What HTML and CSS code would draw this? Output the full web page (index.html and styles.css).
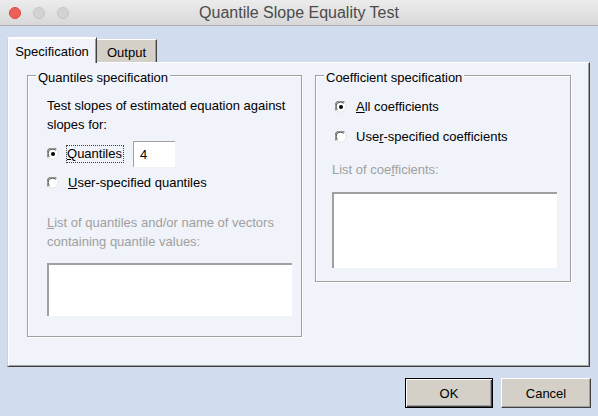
FILE: index.html
```html
<!DOCTYPE html>
<html>
<head>
<meta charset="utf-8">
<link rel="stylesheet" href="styles.css">
</head>
<body>
<div class="window">
  <div class="titlebar">
    <div class="lights">
      <span class="light red"></span><span class="light"></span><span class="light"></span>
    </div>
    <div class="title">Quantile Slope Equality Test</div>
    <div></div>
  </div>
  <div class="content">
    <div class="tabs">
      <div class="tab active">Specification</div>
      <div class="tab">Output</div>
    </div>
    <div class="panel">
      <div class="group g-left">
        <span class="legend">Quantiles specification</span>
        <p class="para">Test slopes of estimated equation against<br>slopes for:</p>
        <div class="row r-q">
          <svg class="radio" width="12" height="12" viewBox="0 0 12 12"><circle cx="6" cy="6" r="5.5" fill="#fff"/><path d="M1.5 9.5 A5.5 5.5 0 0 1 9.5 1.5" fill="none" stroke="#808080" stroke-width="1.2"/><path d="M2.4 8.6 A4.3 4.3 0 0 1 8.6 2.4" fill="none" stroke="#404040" stroke-width="1"/><path d="M9.5 1.5 A5.5 5.5 0 0 1 1.5 9.5" fill="none" stroke="#e2e2e2" stroke-width="1"/><circle cx="6" cy="6" r="2" fill="#000"/></svg>
          <span class="label focus"><u>Q</u>uantiles</span>
          <div class="field">4</div>
        </div>
        <div class="row r-u">
          <svg class="radio" width="12" height="12" viewBox="0 0 12 12"><circle cx="6" cy="6" r="5.5" fill="#fff"/><path d="M1.5 9.5 A5.5 5.5 0 0 1 9.5 1.5" fill="none" stroke="#808080" stroke-width="1.2"/><path d="M2.4 8.6 A4.3 4.3 0 0 1 8.6 2.4" fill="none" stroke="#404040" stroke-width="1"/><path d="M9.5 1.5 A5.5 5.5 0 0 1 1.5 9.5" fill="none" stroke="#e2e2e2" stroke-width="1"/></svg>
          <span class="label"><u>U</u>ser-specified quantiles</span>
        </div>
        <p class="para dis l-list"><u>L</u>ist of quantiles and/or name of vectors<br>containing quantile values:</p>
        <div class="listbox lb-left"></div>
      </div>
      <div class="group g-right">
        <span class="legend">Coefficient specification</span>
        <div class="row r-all">
          <svg class="radio" width="12" height="12" viewBox="0 0 12 12"><circle cx="6" cy="6" r="5.5" fill="#fff"/><path d="M1.5 9.5 A5.5 5.5 0 0 1 9.5 1.5" fill="none" stroke="#808080" stroke-width="1.2"/><path d="M2.4 8.6 A4.3 4.3 0 0 1 8.6 2.4" fill="none" stroke="#404040" stroke-width="1"/><path d="M9.5 1.5 A5.5 5.5 0 0 1 1.5 9.5" fill="none" stroke="#e2e2e2" stroke-width="1"/><circle cx="6" cy="6" r="2" fill="#000"/></svg>
          <span class="label"><u>A</u>ll coefficients</span>
        </div>
        <div class="row r-uc">
          <svg class="radio" width="12" height="12" viewBox="0 0 12 12"><circle cx="6" cy="6" r="5.5" fill="#fff"/><path d="M1.5 9.5 A5.5 5.5 0 0 1 9.5 1.5" fill="none" stroke="#808080" stroke-width="1.2"/><path d="M2.4 8.6 A4.3 4.3 0 0 1 8.6 2.4" fill="none" stroke="#404040" stroke-width="1"/><path d="M9.5 1.5 A5.5 5.5 0 0 1 1.5 9.5" fill="none" stroke="#e2e2e2" stroke-width="1"/></svg>
          <span class="label">Use<u>r</u>-specified coefficients</span>
        </div>
        <p class="para dis l-coef">List of coe<u>f</u>ficients:</p>
        <div class="listbox lb-right"></div>
      </div>
    </div>
    <div class="buttons">
      <div class="btn default">OK</div>
      <div class="btn">Cancel</div>
    </div>
  </div>
</div>
</body>
</html>
```
FILE: styles.css
```css
html, body {
  margin: 0;
  padding: 0;
  background: #d1ddef;
}
.window {
  width: 598px;
  height: 416px;
  font-family: "Liberation Sans", Arial, sans-serif;
  font-size: 13px;
  color: #000;
  overflow: hidden;
}
.titlebar {
  height: 25px;
  border-bottom: 1px solid #b1b1b1;
  background: linear-gradient(#ececec, #d8d8d8);
  display: grid;
  grid-template-columns: 1fr auto 1fr;
  align-items: center;
}
.lights {
  display: flex;
  gap: 12px;
  padding-left: 9px;
}
.light {
  width: 12px;
  height: 12px;
  border-radius: 50%;
  background: #d3d3d3;
  box-sizing: border-box;
  border: 1px solid #c4c4c4;
}
.light.red {
  background: #ed5f57;
  border-color: #dc4a42;
}
.title {
  font-size: 16px;
  color: #4b4b4b;
  font-family: "Liberation Sans", Arial, sans-serif;
}
.content {
  padding: 11px 0 0 7px;
}
.tabs {
  display: flex;
  align-items: flex-end;
  margin-bottom: -1px;
  position: relative;
  z-index: 1;
}
.tab {
  box-sizing: border-box;
  display: flex;
  align-items: center;
  justify-content: center;
}
.tab.active {
  width: 90px;
  height: 26px;
  background: #f0f3f9;
  border-top: 1px solid #fff;
  border-left: 1px solid #d4d0c8;
  border-right: 1px solid #404040;
  box-shadow: inset 1px 1px 0 #fff, inset -1px 0 0 #a0a0a0;
  padding-top: 1px;
}
.tab:not(.active) {
  width: 60px;
  height: 23px;
  margin-bottom: 1px;
  background: #d4d0c8;
  border-top: 1px solid #fff;
  border-right: 1px solid #404040;
  box-shadow: inset -1px 0 0 #a0a0a0;
  padding-top: 2px;
}
.panel {
  box-sizing: border-box;
  width: 583px;
  height: 305px;
  background: #f0f3f9;
  border-top: 1px solid #fff;
  border-left: 1px solid #d4d0c8;
  border-right: 1px solid #404040;
  border-bottom: 1px solid #404040;
  box-shadow: inset 1px 0 0 #fff, inset -1px -1px 0 #a0a0a0;
  padding: 12px 0 0 19px;
  display: flex;
  align-items: flex-start;
  gap: 13px;
}
.group {
  box-sizing: border-box;
  border: 1px solid #a0a0a0;
  box-shadow: 1px 1px 0 #fff, inset 1px 1px 0 #fff;
  display: flex;
  flex-direction: column;
  align-items: flex-start;
}
.g-left {
  width: 275px;
  height: 262px;
  padding-left: 19px;
}
.g-right {
  width: 256px;
  height: 207px;
  padding-left: 16px;
}
.legend {
  display: block;
  margin: -6px 0 0 -11px;
  line-height: 16px;
  height: 16px;
  padding: 0 2px;
  background: #f0f3f9;
}
.g-right .legend {
  margin-left: -8px;
}
.para {
  margin: 10px 0 0 0;
  line-height: 19px;
}
.dis {
  color: #a0a0a0;
}
.row {
  display: flex;
  align-items: center;
  height: 20px;
}
.radio {
  flex: none;
  margin-right: 9px;
}
.r-q {
  height: 26px;
  margin-top: 7px;
}
.r-u {
  margin-top: 6px;
}
.label {
  line-height: 16px;
}
.focus {
  outline: 1px dotted #404040;
  outline-offset: 0;
  padding: 0 1px 0 0;
  margin-left: -1px;
}
.field {
  box-sizing: border-box;
  width: 42px;
  height: 26px;
  margin-left: 10px;
  background: #fff;
  border-top: 1px solid #a0a0a0;
  border-left: 1px solid #a0a0a0;
  padding: 0 0 0 6px;
  display: flex;
  align-items: center;
}
.l-list {
  margin-top: 20px;
}
.listbox {
  box-sizing: border-box;
  background: #fff;
  border-top: 2px solid #a0a0a0;
  border-left: 2px solid #a0a0a0;
}
.lb-left {
  width: 245px;
  height: 53px;
  margin-top: 12px;
}
.r-all {
  margin-top: 11px;
  margin-left: 3px;
}
.r-uc {
  margin-top: 10px;
  margin-left: 3px;
}
.l-coef {
  margin-top: 13px;
}
.lb-right {
  width: 225px;
  height: 76px;
  margin-top: 13px;
}
.buttons {
  display: flex;
  justify-content: flex-end;
  gap: 8px;
  margin-top: 11px;
  padding-right: 7px;
}
.btn {
  box-sizing: border-box;
  width: 88px;
  height: 30px;
  background: #d4d0c8;
  border-top: 1px solid #fff;
  border-left: 1px solid #fff;
  border-right: 1px solid #404040;
  border-bottom: 1px solid #404040;
  box-shadow: inset -1px -1px 0 #a0a0a0;
  display: flex;
  align-items: center;
  justify-content: center;
}
.btn.default {
  border: 1px solid #000;
  box-shadow: inset 1px 1px 0 #fff, inset -1px -1px 0 #404040, inset -2px -2px 0 #a0a0a0;
}
.btn:not(.default) {
  width: 90px;
}
```
